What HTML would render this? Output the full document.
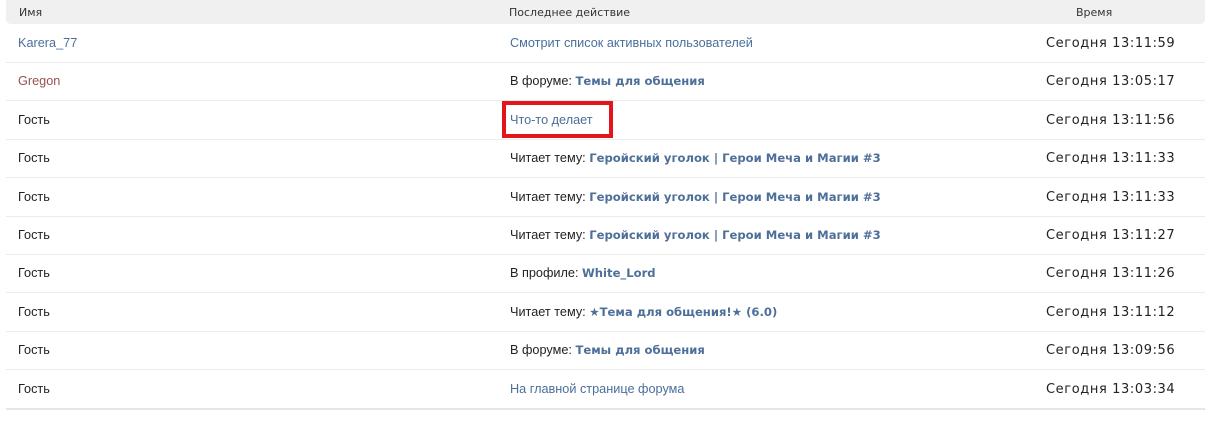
<!DOCTYPE html>
<html><head><meta charset="utf-8"><style>
body{margin:0;background:#fff;width:1225px;height:433px;position:relative;overflow:hidden;font-family:"Liberation Sans","DejaVu Sans",sans-serif;font-size:12.7px;color:#222}
.hd{position:absolute;left:6px;top:0;width:1199px;height:24px;background:#f0f0f0;border-radius:0 0 5px 5px;font-size:11px;color:#333;font-family:"DejaVu Sans",sans-serif}
.hd span{position:absolute;top:6px}
.row{position:absolute;left:6px;width:1199px;height:38px;border-bottom:1px solid #ebebeb}
.row span{position:absolute;top:12px;white-space:nowrap}
.c1{left:12px}.c2{left:504px}.c3{left:1040px;font-family:"DejaVu Sans",sans-serif;font-size:13px;letter-spacing:0.6px}
a{color:#4a6f9a;text-decoration:none}
b{font-family:"DejaVu Sans",sans-serif;font-size:11.6px;font-weight:bold;color:#4d6f99}
.box{position:absolute;left:502px;top:101px;width:103px;height:29px;border:4px solid #e3141c}
</style></head><body>
<div class="hd"><span style="left:13px">Имя</span><span style="left:503px">Последнее действие</span><span style="left:1070px">Время</span></div>
<div class="row" style="top:24px"><span class="c1"><a>Karera_77</a></span><span class="c2"><a>Смотрит список активных пользователей</a></span><span class="c3">Сегодня 13:11:59</span></div>
<div class="row" style="top:62px"><span class="c1" style="color:#9b5050">Gregon</span><span class="c2">В форуме: <a><b>Темы для общения</b></a></span><span class="c3">Сегодня 13:05:17</span></div>
<div class="row" style="top:101px"><span class="c1">Гость</span><span class="c2"><a>Что-то делает</a></span><span class="c3">Сегодня 13:11:56</span></div>
<div class="row" style="top:139px"><span class="c1">Гость</span><span class="c2">Читает тему: <a><b>Геройский уголок | Герои Меча и Магии #3</b></a></span><span class="c3">Сегодня 13:11:33</span></div>
<div class="row" style="top:178px"><span class="c1">Гость</span><span class="c2">Читает тему: <a><b>Геройский уголок | Герои Меча и Магии #3</b></a></span><span class="c3">Сегодня 13:11:33</span></div>
<div class="row" style="top:216px"><span class="c1">Гость</span><span class="c2">Читает тему: <a><b>Геройский уголок | Герои Меча и Магии #3</b></a></span><span class="c3">Сегодня 13:11:27</span></div>
<div class="row" style="top:254px"><span class="c1">Гость</span><span class="c2">В профиле: <a><b>White_Lord</b></a></span><span class="c3">Сегодня 13:11:26</span></div>
<div class="row" style="top:293px"><span class="c1">Гость</span><span class="c2">Читает тему: <a><b>★Тема для общения!★ (6.0)</b></a></span><span class="c3">Сегодня 13:11:12</span></div>
<div class="row" style="top:331px"><span class="c1">Гость</span><span class="c2">В форуме: <a><b>Темы для общения</b></a></span><span class="c3">Сегодня 13:09:56</span></div>
<div class="row" style="top:370px;border-bottom:2px solid #e6e6e6"><span class="c1">Гость</span><span class="c2"><a>На главной странице форума</a></span><span class="c3">Сегодня 13:03:34</span></div>
<div class="box"></div>
</body></html>
